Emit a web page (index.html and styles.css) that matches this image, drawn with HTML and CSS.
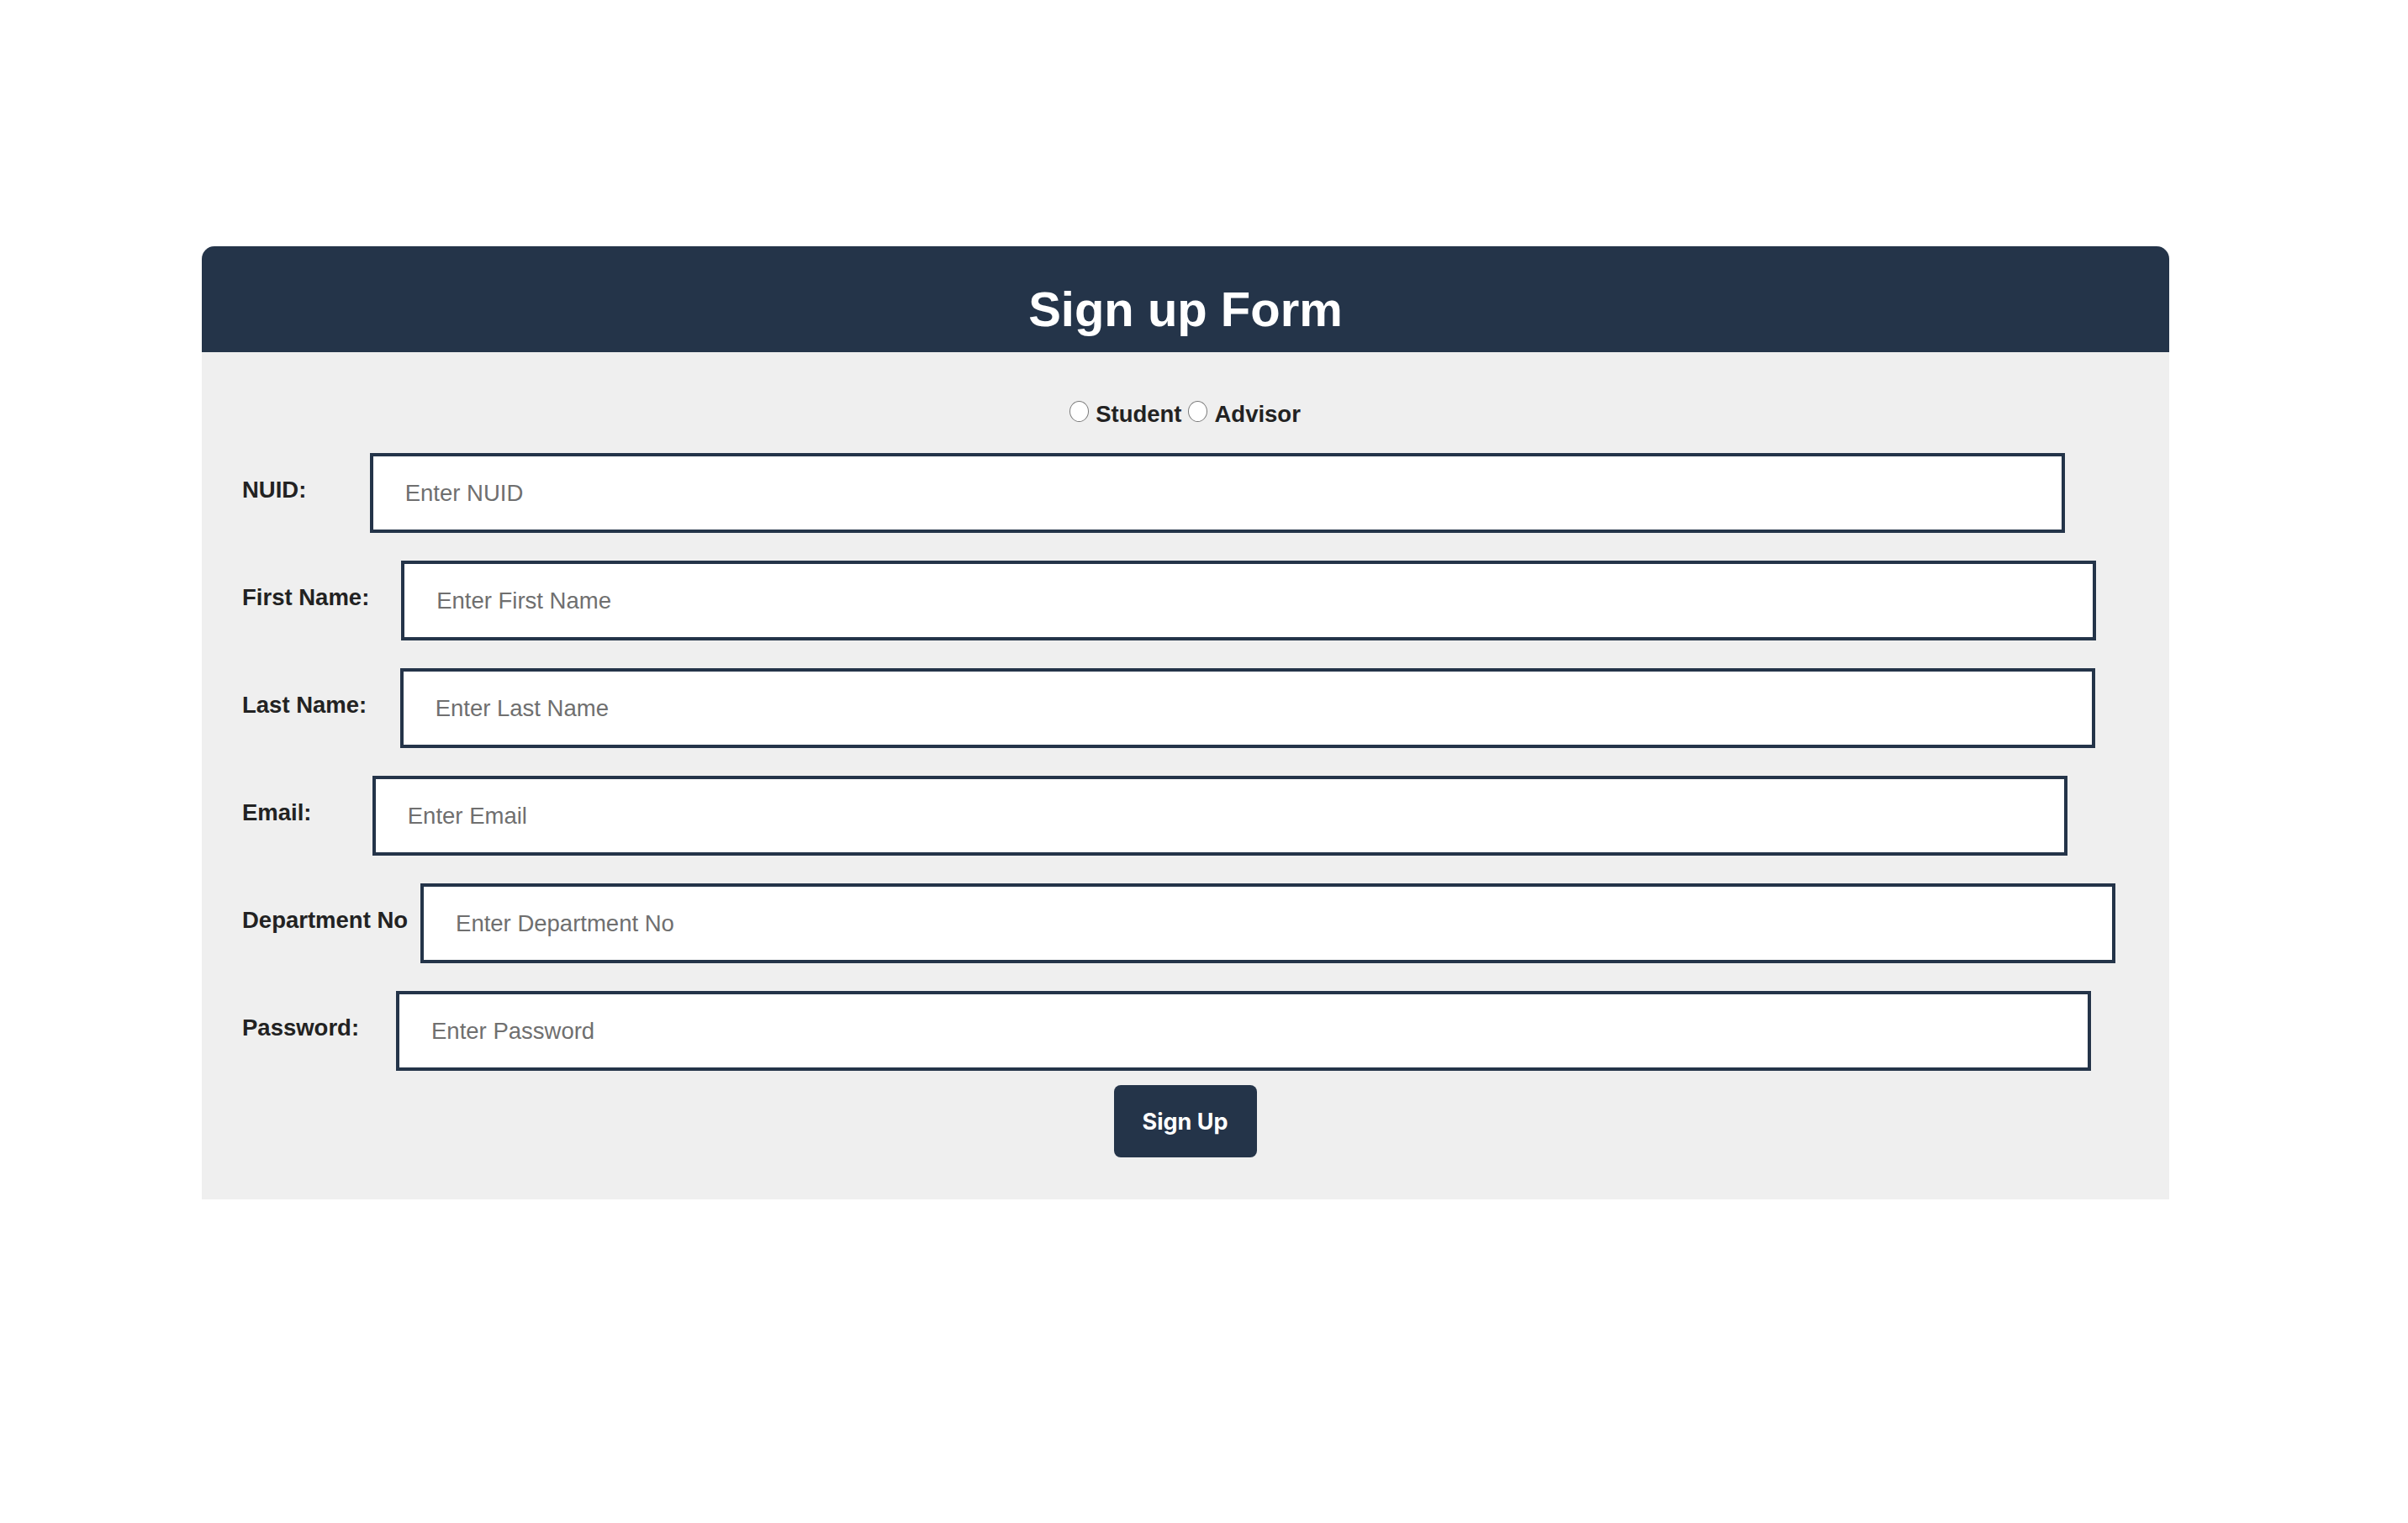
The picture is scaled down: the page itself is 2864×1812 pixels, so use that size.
FILE: index.html
```html
<!DOCTYPE html>
<html lang="en">
<head>
<meta charset="utf-8">
<title>Sign up Form</title>
<link rel="stylesheet" href="styles.css">
</head>
<body>
<div class="card">
  <header class="card-header">
    <h1 class="card-title">Sign up Form</h1>
  </header>
  <form class="card-body">
    <div class="role-group">
      <input class="role-radio" type="radio" name="role" id="r-student"><label class="role-label" for="r-student">Student</label>
      <input class="role-radio" type="radio" name="role" id="r-advisor"><label class="role-label" for="r-advisor">Advisor</label>
    </div>
    <div class="field-row first-row">
      <label class="field-label" for="f-nuid">NUID:</label>
      <input class="field-input" id="f-nuid" type="text" placeholder="Enter NUID">
    </div>
    <div class="field-row">
      <label class="field-label" for="f-first">First Name:</label>
      <input class="field-input" id="f-first" type="text" placeholder="Enter First Name">
    </div>
    <div class="field-row">
      <label class="field-label" for="f-last">Last Name:</label>
      <input class="field-input" id="f-last" type="text" placeholder="Enter Last Name">
    </div>
    <div class="field-row">
      <label class="field-label" for="f-email">Email:</label>
      <input class="field-input" id="f-email" type="email" placeholder="Enter Email">
    </div>
    <div class="field-row">
      <label class="field-label" for="f-dept">Department No</label>
      <input class="field-input" id="f-dept" type="text" placeholder="Enter Department No">
    </div>
    <div class="field-row">
      <label class="field-label" for="f-pass">Password:</label>
      <input class="field-input" id="f-pass" type="password" placeholder="Enter Password">
    </div>
    <div class="actions">
      <button class="submit-btn" type="button">Sign Up</button>
    </div>
  </form>
</div>
</body>
</html>
```
FILE: styles.css
```css
* { box-sizing: border-box; }

body {
  margin: 0;
  background: #ffffff;
  font-family: "Liberation Sans", Arial, Helvetica, sans-serif;
  color: #222222;
}

.card {
  width: 2340px;
  margin: 293px 0 0 240px;
  background: #efefef;
  border-radius: 15px 15px 0 0;
  overflow: hidden;
}

.card-header {
  height: 126px;
  background: #243449;
  padding-top: 45px;
}

.card-title {
  margin: 0;
  text-align: center;
  color: #ffffff;
  font-size: 58px;
  line-height: 60px;
  font-weight: 700;
}

.card-body {
  display: flex;
  flex-direction: column;
  padding: 59px 49px 50px 48px;
}

.role-group {
  display: flex;
  justify-content: center;
  align-items: flex-start;
  height: 30px;
}

.role-radio {
  appearance: none;
  -webkit-appearance: none;
  flex: none;
  width: 23px;
  height: 25px;
  margin: -1px 8px 0 0;
  border: 1.5px solid #7a7a7a;
  border-radius: 50%;
  background: #ffffff;
}

.role-label {
  font-size: 27.5px;
  line-height: 30px;
  font-weight: 700;
  margin-right: 8px;
}

.role-label:last-child { margin-right: 0; }

.field-row {
  display: flex;
  align-items: center;
  margin-top: 33px;
}

.field-row.first-row { margin-top: 31px; }

.field-label {
  flex: none;
  font-size: 27.5px;
  line-height: 30px;
  font-weight: 700;
  margin-bottom: 8px;
  white-space: nowrap;
}

.field-input {
  flex: none;
  width: 2016px;
  height: 95px;
  margin: 0 auto;
  border: 4px solid #243449;
  border-radius: 0;
  background: #ffffff;
  padding: 0 0 0 38px;
  font-family: "Liberation Sans", Arial, Helvetica, sans-serif;
  font-size: 27.5px;
  color: #222222;
  outline: none;
}

.field-input::placeholder { color: #6f6f6f; }

.actions {
  display: flex;
  justify-content: center;
  margin-top: 17px;
}

.submit-btn {
  width: 170px;
  height: 86px;
  border: none;
  border-radius: 8px;
  background: #243449;
  color: #ffffff;
  font-family: Inter, "Liberation Sans", sans-serif;
  font-size: 27px;
  font-weight: 700;
}
```
